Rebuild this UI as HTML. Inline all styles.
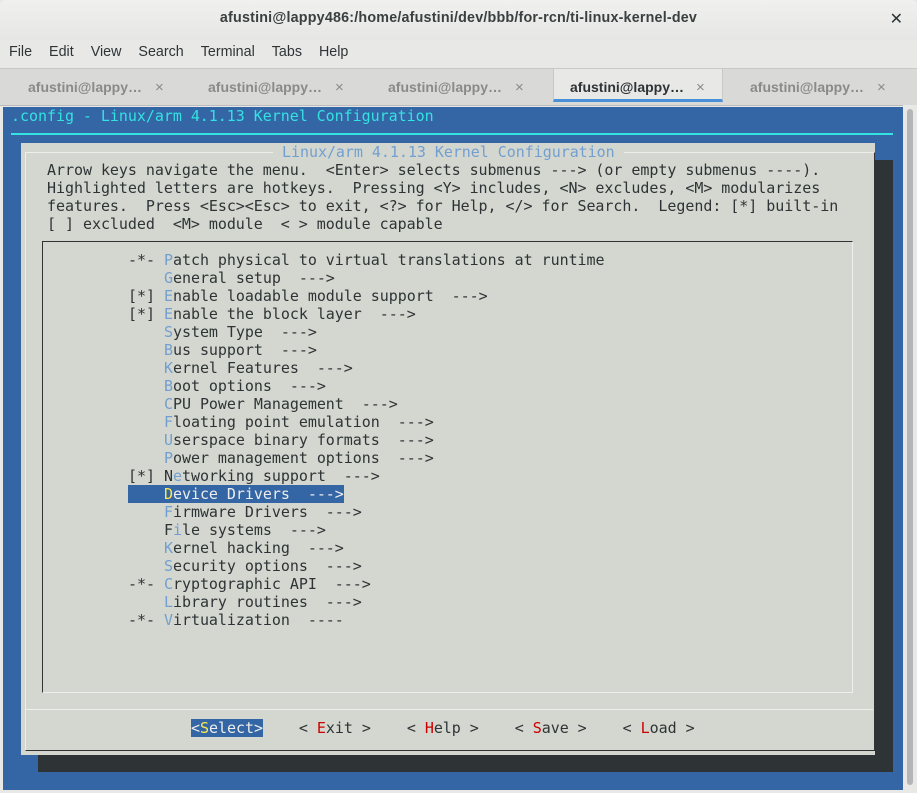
<!DOCTYPE html>
<html><head><style>
body{margin:0;width:917px;height:793px;background:#e8e8e7;position:relative;overflow:hidden;font-family:"Liberation Sans","DejaVu Sans",sans-serif}
.tb{position:absolute;left:0;top:0;width:917px;height:40px;background:linear-gradient(#f0f0ef,#e6e6e5);border-radius:6px 6px 0 0}
.title{position:absolute;top:10px;left:0;width:917px;text-align:center;font-weight:bold;font-size:14.3px;color:#3a3f40;letter-spacing:0.2px}
.cls{position:absolute;right:14px;top:9px;font-size:16px;color:#2e3436}
.menu{position:absolute;top:44px;left:9px;font-size:14.3px;color:#2e3436}
.menu span{margin-right:17px}
.tabs{position:absolute;top:68px;left:0;width:917px;height:36px;background:#d9d9d8;border-top:1px solid #c8c8c7;border-bottom:1px solid #bbb}
.tab{position:absolute;top:0;height:36px;font-size:14px;color:#8a8a8a;line-height:37px;font-weight:bold}
.tab i{font-style:normal;position:absolute;font-weight:normal;font-size:15px}
.term{position:absolute;left:3px;top:107px;width:900px;height:683px;background:#3465a4}
.sb{position:absolute;left:903px;top:105px;width:14px;height:688px;background:#e8e8e7}
.sb div{position:absolute;left:4px;top:4px;width:6px;height:676px;background:#b5b5b5;border-radius:3px}
pre{margin:0;font-family:"DejaVu Sans Mono","Liberation Mono",monospace;font-size:15px;letter-spacing:-0.04px;line-height:18px;position:absolute;left:0;top:0;color:#2e3436;white-space:pre}
.h{color:#729fcf}.r{color:#cc0000}.y{color:#fce94f}
.sel{background:#3465a4;color:#eeeeec}
</style></head><body>
<div class="tb"><div class="title">afustini@lappy486:/home/afustini/dev/bbb/for-rcn/ti-linux-kernel-dev</div><div class="cls">✕</div></div>
<div class="menu"><span>File</span><span>Edit</span><span>View</span><span>Search</span><span>Terminal</span><span>Tabs</span><span>Help</span></div>
<div class="tabs">
<div class="tab" style="left:28px">afustini@lappy…<i style="left:127px">×</i></div>
<div class="tab" style="left:208px">afustini@lappy…<i style="left:127px">×</i></div>
<div class="tab" style="left:388px">afustini@lappy…<i style="left:127px">×</i></div>
<div class="tab" style="left:553px;width:170px;background:#e8e8e7;color:#2e3436;border-left:1px solid #c8c8c7;border-right:1px solid #c8c8c7;border-bottom:3px solid #4a90d9;height:33px;padding-left:16px;box-sizing:border-box">afustini@lappy…<i style="left:142px;color:#8a8a8a">×</i></div>
<div class="tab" style="left:750px">afustini@lappy…<i style="left:127px">×</i></div>
</div>
<div class="sb"><div></div></div>
<div class="term">
<pre style="left:8px;top:0;color:#34e2e2">.config - Linux/arm 4.1.13 Kernel Configuration</pre>
<div style="position:absolute;left:8px;top:26px;width:882px;height:2px;background:#34e2e2"></div>
<div style="position:absolute;left:35px;top:53px;width:855px;height:612px;background:#2e3436"></div>
<div style="position:absolute;left:18px;top:36px;width:854px;height:612px;background:#d3d7cf"></div>
<div style="position:absolute;left:22px;top:45px;width:848px;height:597px;border-left:1px solid #eeeeec;border-top:1px solid #eeeeec;border-right:1px solid #2e3436;border-bottom:1px solid #2e3436"></div>
<div style="position:absolute;left:23px;top:602px;width:847px;height:1px;background:#eeeeec"></div>
<div style="position:absolute;left:39px;top:134px;width:809px;height:450px;border-left:1px solid #2e3436;border-top:1px solid #2e3436;border-right:1px solid #eeeeec;border-bottom:1px solid #eeeeec"></div>
<pre style="left:270px;top:36px;background:#d3d7cf;color:#729fcf"> Linux/arm 4.1.13 Kernel Configuration </pre>
<pre style="left:44px;top:54px">Arrow keys navigate the menu.  &lt;Enter&gt; selects submenus ---&gt; (or empty submenus ----).
Highlighted letters are hotkeys.  Pressing &lt;Y&gt; includes, &lt;N&gt; excludes, &lt;M&gt; modularizes
features.  Press &lt;Esc&gt;&lt;Esc&gt; to exit, &lt;?&gt; for Help, &lt;/&gt; for Search.  Legend: [*] built-in
[ ] excluded  &lt;M&gt; module  &lt; &gt; module capable</pre>
<pre style="left:125px;top:144px">-*- <span class="h">P</span>atch physical to virtual translations at runtime
    <span class="h">G</span>eneral setup  ---&gt;
[*] <span class="h">E</span>nable loadable module support  ---&gt;
[*] <span class="h">E</span>nable the block layer  ---&gt;
    <span class="h">S</span>ystem Type  ---&gt;
    <span class="h">B</span>us support  ---&gt;
    <span class="h">K</span>ernel Features  ---&gt;
    <span class="h">B</span>oot options  ---&gt;
    <span class="h">C</span>PU Power Management  ---&gt;
    <span class="h">F</span>loating point emulation  ---&gt;
    <span class="h">U</span>serspace binary formats  ---&gt;
    <span class="h">P</span>ower management options  ---&gt;
[*] N<span class="h">e</span>tworking support  ---&gt;
<span class="sel">    <span class="y">D</span>evice Drivers  ---&gt;</span>
    <span class="h">F</span>irmware Drivers  ---&gt;
    F<span class="h">i</span>le systems  ---&gt;
    <span class="h">K</span>ernel hacking  ---&gt;
    <span class="h">S</span>ecurity options  ---&gt;
-*- <span class="h">C</span>ryptographic API  ---&gt;
    <span class="h">L</span>ibrary routines  ---&gt;
-*- <span class="h">V</span>irtualization  ----</pre>
<pre style="left:188px;top:612px"><span class="sel">&lt;<span class="y">S</span>elect&gt;</span>    &lt; <span class="r">E</span>xit &gt;    &lt; <span class="r">H</span>elp &gt;    &lt; <span class="r">S</span>ave &gt;    &lt; <span class="r">L</span>oad &gt;</pre>
</div>
</body></html>
